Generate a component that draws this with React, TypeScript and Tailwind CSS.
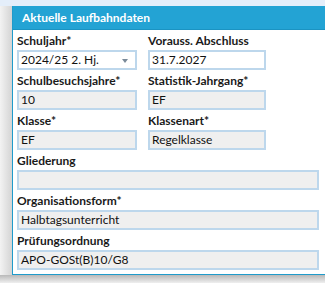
import React from "react";

const font = { fontFamily: 'Lato, "Noto Sans", sans-serif' };

function Label({ children }: { children: React.ReactNode }) {
  return <div className="h-[20px] pt-[3px] text-[12px] font-bold leading-[16px] text-[#1a1a1a] whitespace-nowrap">{children}</div>;
}

function Field({ value, white, arrow }: { value?: string; white?: boolean; arrow?: boolean }) {
  return (
    <div
      className={`h-[20px] border-2 border-[#bdd7ec] flex items-center pl-[2px] text-[12px] text-[#111] relative ${white ? "bg-white" : "bg-[#efefef]"}`}
    >
      <span className="leading-[16px]">{value}</span>
      {arrow && (
        <svg className="absolute right-[7px] top-[7px]" width="6" height="4" viewBox="0 0 6 4">
          <path d="M0 0 L6 0 L3 4 Z" fill="#7a8a99" />
        </svg>
      )}
    </div>
  );
}

function Cell({ label, value, white, arrow }: { label: string; value?: string; white?: boolean; arrow?: boolean }) {
  return (
    <div>
      <Label>{label}</Label>
      <Field value={value} white={white} arrow={arrow} />
    </div>
  );
}

export default function App() {
  return (
    <div className="w-[325px] h-[283px] overflow-hidden relative bg-[#ebebeb]" style={font}>
      <div className="h-[6px] bg-[#e4eefa]" />
      <div className="absolute left-0 top-[6px] w-[12px] h-[277px] bg-gradient-to-r from-[#f3f3f3] to-[#d4d4d4]" />
      <div className="absolute left-0 top-[275px] w-[325px] h-[8px] bg-gradient-to-b from-[#b9b9b9] to-[#efefef]" />
      <div className="ml-[12px] w-[330px] h-[269px] bg-white border-l-[1px] border-b-[1px] border-[#1f9bcb] flex flex-col relative">
        <div className="h-[24px] bg-[#23a3d4] border-b border-[#1b93c2] flex items-center pl-[9px] text-white text-[12px] font-bold">
          Aktuelle Laufbahndaten
        </div>
        <div className="pl-[4px] flex flex-col">
          <div className="grid grid-cols-[120px_118px] gap-x-[11px]">
            <Cell label="Schuljahr*" value="2024/25 2. Hj." white arrow />
            <Cell label="Vorauss. Abschluss" value="31.7.2027" white />
          </div>
          <div className="grid grid-cols-[120px_118px] gap-x-[11px]">
            <Cell label="Schulbesuchsjahre*" value="10" />
            <Cell label="Statistik-Jahrgang*" value="EF" />
          </div>
          <div className="grid grid-cols-[120px_118px] gap-x-[11px]">
            <Cell label="Klasse*" value="EF" />
            <Cell label="Klassenart*" value="Regelklasse" />
          </div>
          <div className="w-[302px]">
            <Cell label="Gliederung" />
          </div>
          <div className="w-[302px]">
            <Cell label="Organisationsform*" value="Halbtagsunterricht" />
          </div>
          <div className="w-[302px]">
            <Cell label="Prüfungsordnung" value="APO-GOSt(B)10/G8" />
          </div>
        </div>
      </div>
    </div>
  );
}
